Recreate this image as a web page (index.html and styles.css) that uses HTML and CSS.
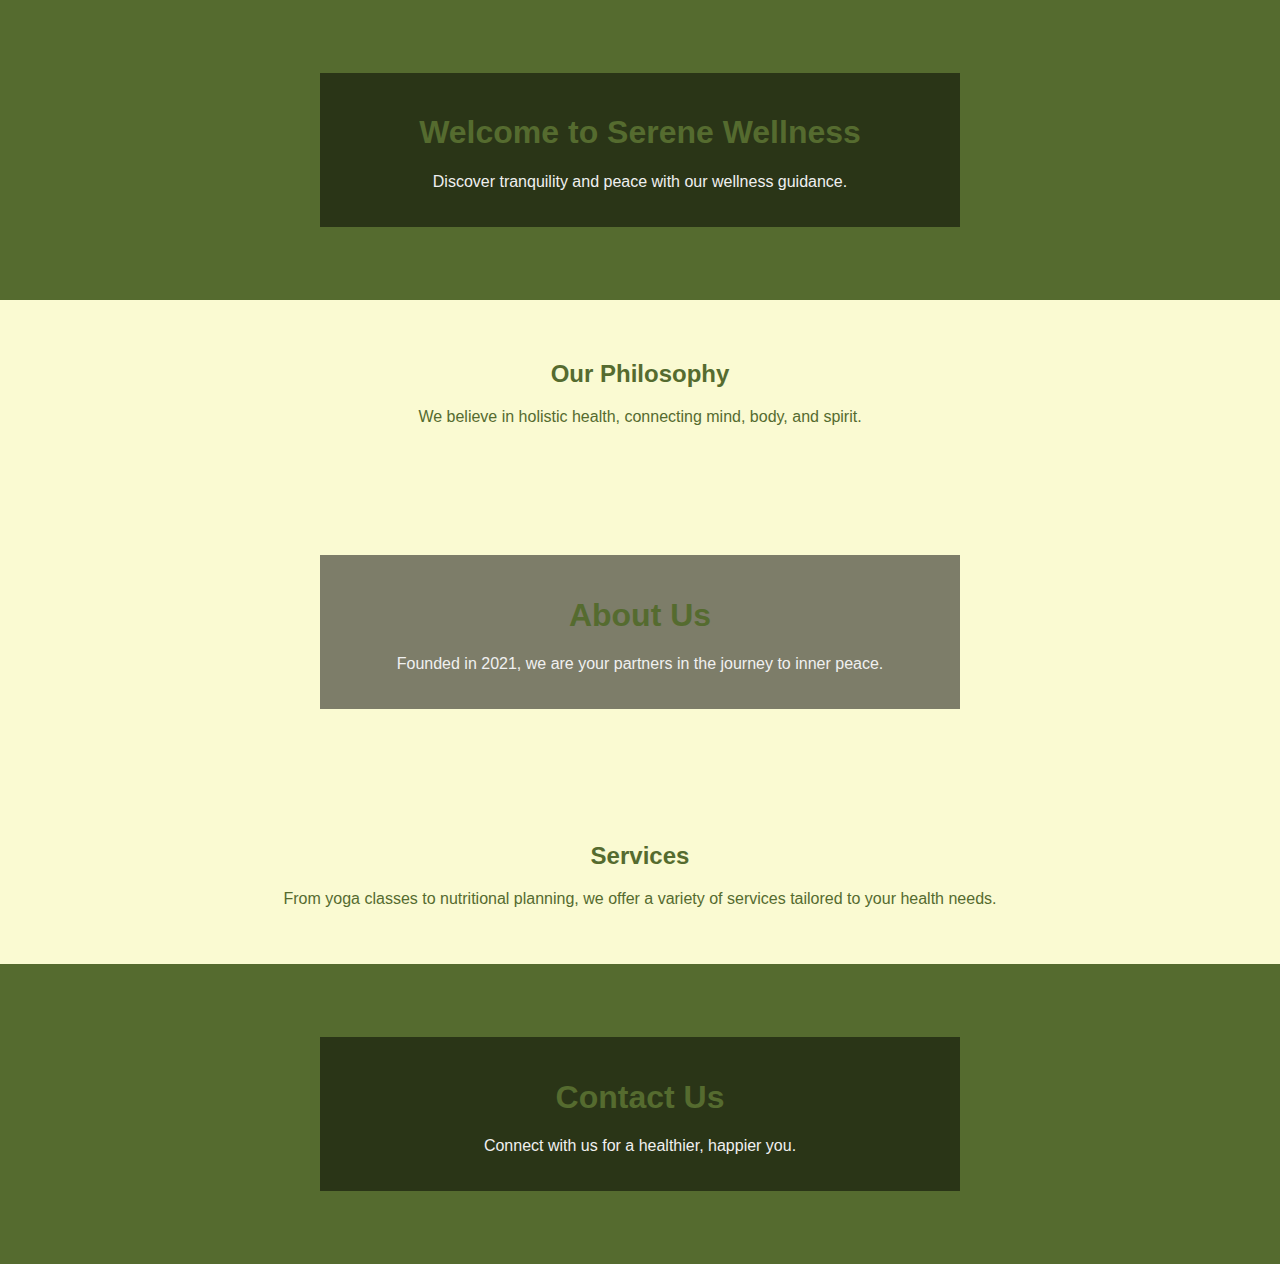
FILE: index.html
```html
<!DOCTYPE html>
<html lang="en">
<head>
<meta charset="utf-8">
<title>Serene Wellness</title>
<link rel="stylesheet" href="styles.css">
</head>
<body>
<section class="band band-dark">
  <div class="panel">
    <h1 class="panel-title">Welcome to Serene Wellness</h1>
    <p class="panel-text">Discover tranquility and peace with our wellness guidance.</p>
  </div>
</section>
<section class="plain">
  <h2 class="plain-title">Our Philosophy</h2>
  <p class="plain-text">We believe in holistic health, connecting mind, body, and spirit.</p>
</section>
<section class="band band-light">
  <div class="panel">
    <h1 class="panel-title">About Us</h1>
    <p class="panel-text">Founded in 2021, we are your partners in the journey to inner peace.</p>
  </div>
</section>
<section class="plain">
  <h2 class="plain-title">Services</h2>
  <p class="plain-text">From yoga classes to nutritional planning, we offer a variety of services tailored to your health needs.</p>
</section>
<section class="band band-dark">
  <div class="panel">
    <h1 class="panel-title">Contact Us</h1>
    <p class="panel-text">Connect with us for a healthier, happier you.</p>
  </div>
</section>
</body>
</html>
```
FILE: styles.css
```css
html, body {
  margin: 0;
  padding: 0;
}
body {
  font-family: "Liberation Sans", Arial, sans-serif;
  background: #fafad2;
  color: #556b2f;
}
.band {
  padding: 73px 0;
  display: flex;
  justify-content: center;
}
.band-dark {
  background: #556b2f;
}
.band-light {
  background: #fafad2;
}
.panel {
  width: 600px;
  padding: 20px;
  background: rgba(0, 0, 0, 0.5);
  text-align: center;
}
.panel-title {
  font-size: 32px;
  margin: 21.44px 0;
  color: #556b2f;
}
.panel-text {
  font-size: 16px;
  margin: 16px 0;
  color: #f0f0f0;
}
.plain {
  padding: 40px 0 40.4px;
  text-align: center;
}
.plain-title {
  font-size: 24px;
  margin: 19.92px 0;
}
.plain-text {
  font-size: 16px;
  margin: 16px 0;
}
```
